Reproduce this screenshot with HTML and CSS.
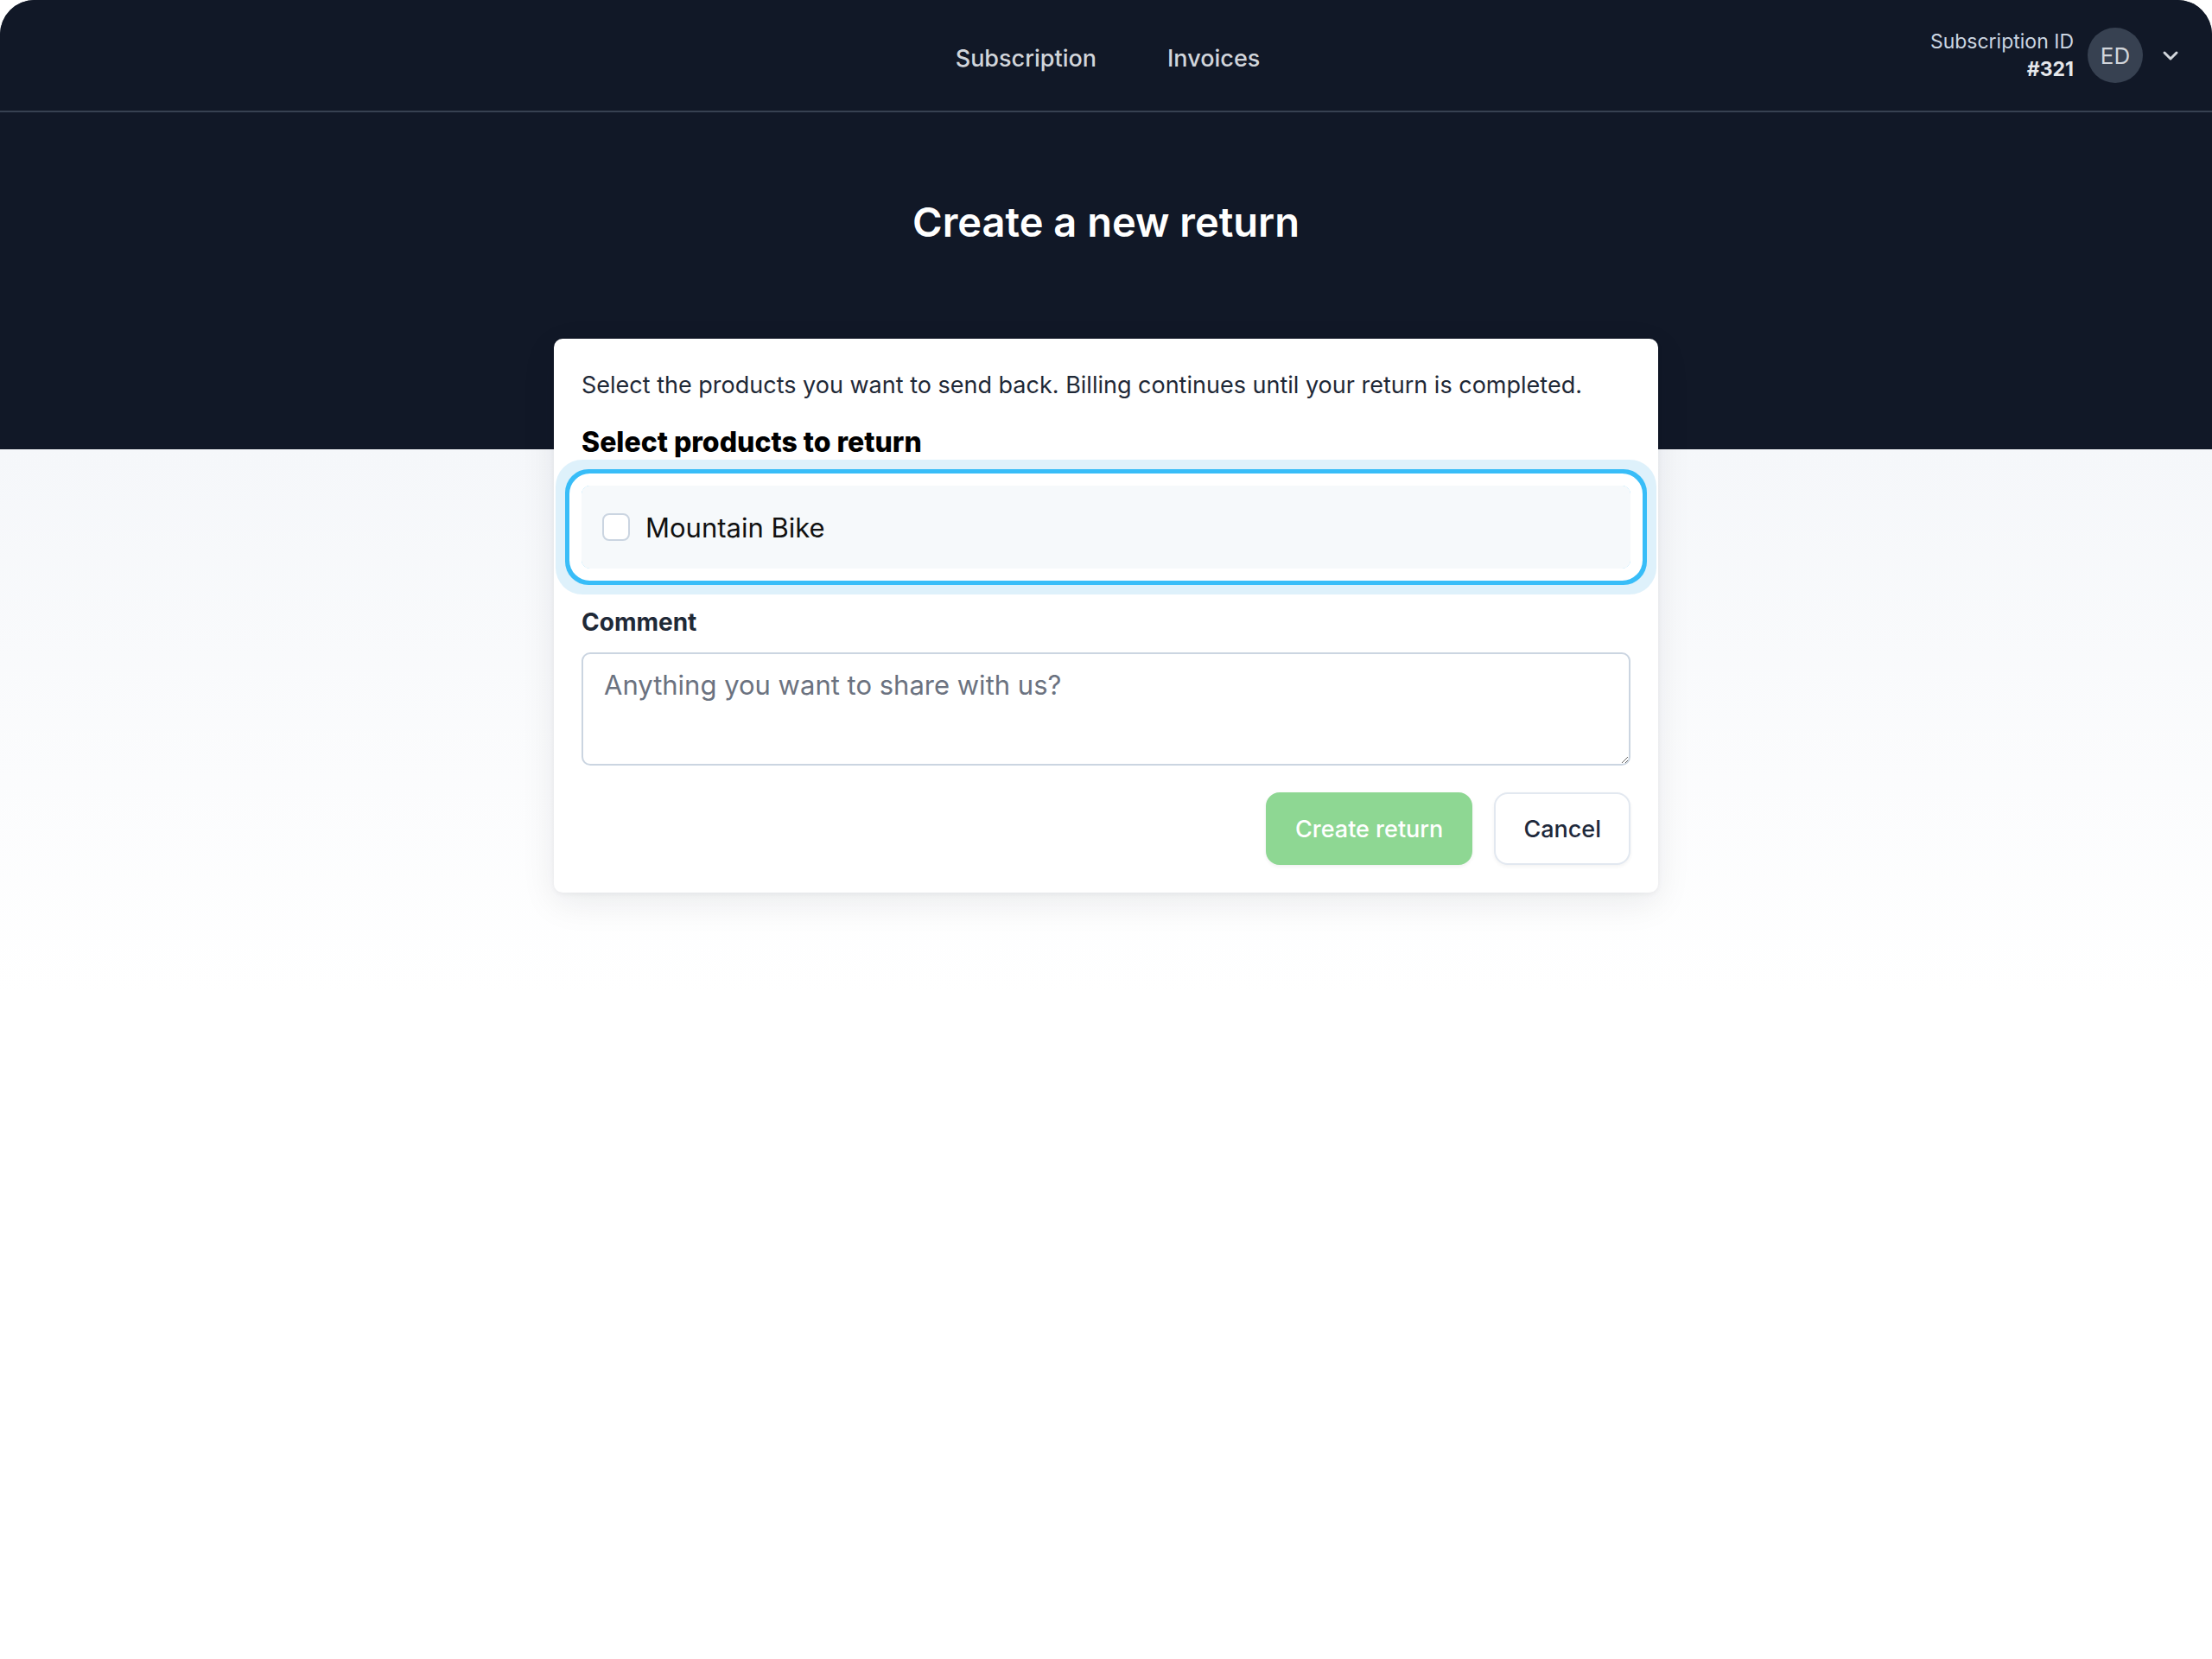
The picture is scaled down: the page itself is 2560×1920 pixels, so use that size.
FILE: index.html
```html
<!DOCTYPE html>
<html lang="en">
<head>
<meta charset="utf-8">
<title>Create a new return</title>
<link rel="stylesheet" href="styles.css">
</head>
<body>
<div class="app">
  <header class="topbar">
    <div class="topbar-side"></div>
    <nav class="nav">
      <a class="nav-link" href="#">Subscription</a>
      <a class="nav-link" href="#">Invoices</a>
    </nav>
    <div class="topbar-side account">
      <div class="sub-id">
        <span class="sub-id-label">Subscription ID</span>
        <span class="sub-id-value">#321</span>
      </div>
      <div class="avatar">ED</div>
      <svg class="chevron" width="24" height="24" viewBox="0 0 24 24" fill="none" stroke="currentColor" stroke-width="3" stroke-linecap="round" stroke-linejoin="round"><path d="M5 9l7 7 7-7"/></svg>
    </div>
  </header>
  <section class="hero">
    <h1 class="hero-title">Create a new return</h1>
  </section>
  <main class="content">
    <div class="card">
      <p class="intro">Select the products you want to send back. Billing continues until your return is completed.</p>
      <h2 class="section-title">Select products to return</h2>
      <div class="product-ring">
        <label class="product">
          <span class="checkbox"></span>
          <span class="product-name">Mountain Bike</span>
        </label>
      </div>
      <label class="field-label" for="comment">Comment</label>
      <textarea id="comment" class="comment" placeholder="Anything you want to share with us?"></textarea>
      <div class="actions">
        <button class="btn btn-primary" type="button">Create return</button>
        <button class="btn btn-secondary" type="button">Cancel</button>
      </div>
    </div>
  </main>
</div>
</body>
</html>
```

FILE: styles.css
```css
* { box-sizing: border-box; }
html, body { margin: 0; padding: 0; background: #ffffff; }
body { font-family: "Inter", "Noto Sans", sans-serif; }

.app {
  min-height: 1920px;
  border-radius: 40px;
  overflow: hidden;
  background: linear-gradient(to bottom, #111827 0, #111827 520px, #f5f7fa 520px, #ffffff 1150px, #ffffff 100%);
}

.topbar {
  height: 130px;
  display: grid;
  grid-template-columns: 1fr auto 1fr;
  align-items: center;
  padding: 0 36px 0 40px;
  border-bottom: 2px solid #374151;
  background: #111827;
}

.nav {
  display: flex;
  gap: 82px;
  align-items: center;
  margin-top: 7px;
}
.nav-link {
  color: #d1d5db;
  font-size: 27px;
  font-weight: 500;
  text-decoration: none;
}

.account {
  display: flex;
  justify-content: flex-end;
  align-items: center;
}
.sub-id {
  display: flex;
  flex-direction: column;
  align-items: flex-end;
  line-height: 32px;
  margin-right: 16px;
}
.sub-id-label { color: #cbd5e1; font-size: 23px; }
.sub-id-value { color: #e5e7eb; font-size: 23px; font-weight: 700; }
.avatar {
  width: 64px;
  height: 64px;
  border-radius: 50%;
  background: #374151;
  color: #d1d5db;
  font-size: 26px;
  display: flex;
  align-items: center;
  justify-content: center;
}
.chevron { color: #d1d5db; margin-left: 20px; }

.hero {
  background: #111827;
  padding: 99px 0 235px;
  text-align: center;
}
.hero-title {
  margin: 0;
  color: #ffffff;
  font-size: 47px;
  line-height: 56px;
  font-weight: 600;
}

.content {
  margin-top: -128px;
  display: flex;
  justify-content: center;
}
.card {
  width: 1278px;
  background: #ffffff;
  border-radius: 10px;
  padding: 32px;
  display: flex;
  flex-direction: column;
  box-shadow: 0 12px 40px rgba(15, 23, 42, 0.08), 0 2px 6px rgba(15, 23, 42, 0.05);
}
.intro {
  margin: 0;
  font-size: 27px;
  line-height: 44px;
  color: #1f2937;
}
.section-title {
  margin: 24px 0 0;
  font-size: 32px;
  line-height: 40px;
  font-weight: 800;
  color: #000000;
}

.product-ring {
  margin-top: 30px;
  border-radius: 10px;
  box-shadow: 0 0 0 14px #ffffff, 0 0 0 19px #38bdf8, 0 0 0 30px rgba(125, 200, 240, 0.25);
}
.product {
  height: 96px;
  display: flex;
  align-items: center;
  padding: 0 24px;
  border-radius: 10px;
  background: #f6f9fb;
}
.checkbox {
  width: 32px;
  height: 32px;
  border: 2px solid #cbd5e1;
  border-radius: 8px;
  background: #ffffff;
  margin-right: 18px;
}
.product-name { font-size: 31px; color: #111111; }

.field-label {
  margin-top: 44px;
  font-size: 28px;
  line-height: 36px;
  font-weight: 700;
  color: #1f2937;
}
.comment {
  margin-top: 17px;
  height: 131px;
  border: 2px solid #cbd5e1;
  border-radius: 10px;
  padding: 16px 24px;
  font-family: "Inter", "Noto Sans", sans-serif;
  font-size: 31px;
  line-height: 40px;
  color: #111827;
  resize: vertical;
}
.comment::placeholder { color: #6b7280; }

.actions {
  margin-top: 31px;
  display: flex;
  justify-content: flex-end;
  gap: 25px;
}
.btn {
  height: 84px;
  padding: 0 32px;
  border-radius: 16px;
  font-family: "Inter", "Noto Sans", sans-serif;
  font-size: 27px;
  font-weight: 500;
  cursor: pointer;
}
.btn-primary {
  background: #8ed793;
  color: #ffffff;
  border: 2px solid #8ed793;
  box-shadow: 0 2px 4px rgba(0, 0, 0, 0.06);
}
.btn-secondary {
  background: #ffffff;
  color: #1e293b;
  border: 2px solid #e2e8f0;
  box-shadow: 0 2px 4px rgba(0, 0, 0, 0.05);
}
```
